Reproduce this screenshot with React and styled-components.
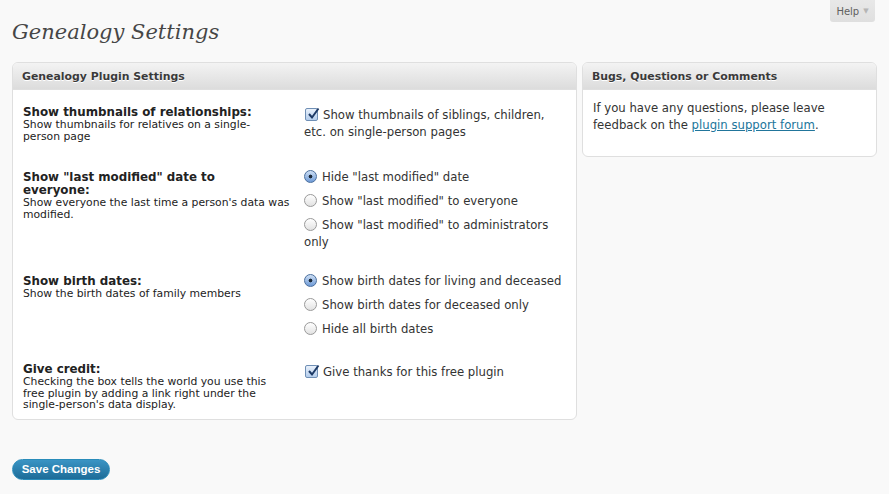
import React from 'react'
import styled, { createGlobalStyle } from 'styled-components'

const GlobalStyle = createGlobalStyle`
  * {
    box-sizing: border-box;
    margin: 0;
    padding: 0;
  }
  body {
    background: #f9f9f9;
    font-family: "DejaVu Sans", Verdana, sans-serif;
    color: #333;
  }
`

const Page = styled.div`
  position: relative;
  min-height: 494px;
  padding: 0 12px;
`

const HelpTab = styled.div`
  position: absolute;
  top: 0;
  right: 14px;
  width: 45px;
  height: 22px;
  display: flex;
  align-items: center;
  justify-content: center;
  gap: 4px;
  background: linear-gradient(to bottom, #e8e8e8, #dfdfdf);
  border-radius: 0 0 3px 3px;
  font-size: 10px;
  color: #606060;
  span {
    font-size: 7px;
    color: #b5b5b5;
  }
`

const Title = styled.h2`
  font-family: "DejaVu Serif", Georgia, serif;
  font-style: italic;
  font-weight: normal;
  font-size: 21px;
  line-height: 29px;
  color: #464646;
  padding: 18px 0 15px;
`

const Columns = styled.div`
  display: flex;
  align-items: flex-start;
  gap: 5px;
`

const Panel = styled.div`
  width: ${p => p.$width}px;
  background: #fff;
  border: 1px solid #dfdfdf;
  border-radius: 6px;
  overflow: hidden;
`

const PanelHeader = styled.h3`
  height: 27px;
  padding: 0 9px;
  display: flex;
  align-items: center;
  font-size: 10.9px;
  font-weight: bold;
  color: #3a3a3a;
  text-shadow: 0 1px 0 #fff;
  background: linear-gradient(to bottom, #f3f3f3, #dcdcdc);
  border-bottom: 1px solid #dfdfdf;
`

const FormBody = styled.div`
  padding: 14px 10px 0;
`

const Row = styled.div`
  display: grid;
  grid-template-columns: 281px 1fr;
  padding-bottom: ${p => p.$space}px;
`

const Label = styled.div`
  padding: 2px 8px 0 0;
`

const LabelTitle = styled.div`
  font-size: 11.85px;
  line-height: 13px;
  font-weight: bold;
  color: #222;
  white-space: pre-line;
`

const Desc = styled.div`
  font-size: 10.8px;
  line-height: 11.5px;
  color: #222;
  white-space: pre-line;
`

const Options = styled.div`
  display: flex;
  flex-direction: column;
  gap: 7px;
  padding-top: ${p => (p.$check ? 3 : 0)}px;
`

const Option = styled.label`
  display: block;
  font-size: 11.7px;
  line-height: 17px;
  color: #333;
`

const Box = styled.span`
  display: inline-block;
  vertical-align: -2px;
  width: 13px;
  height: 13px;
  margin: 0 5px 0 1px;
  border-radius: 2px;
  border: 1px solid #6f8fb5;
  background: linear-gradient(to bottom, #e9f1fb, #b4cdec);
  position: relative;
  svg {
    position: absolute;
    left: 1px;
    top: -2px;
  }
`

const Radio = styled.span`
  display: inline-block;
  vertical-align: -2px;
  width: 13px;
  height: 13px;
  margin-right: 5px;
  border-radius: 50%;
  border: 1px solid ${p => (p.$on ? '#4a6f9e' : '#9a9a9a')};
  background: ${p =>
    p.$on
      ? 'radial-gradient(circle at 50% 50%, #1c2a3a 0 1.6px, transparent 2.2px), linear-gradient(to bottom, #cfe0f5, #6e9ad6)'
      : 'linear-gradient(to bottom, #ffffff, #e2e2e2)'};
`

const SideBody = styled.div`
  padding: 10px 10px 22px;
  font-size: 11.7px;
  line-height: 17px;
  color: #333;
  a {
    color: #21759b;
  }
`

const SaveButton = styled.button`
  margin-top: 39px;
  width: 98px;
  height: 21px;
  border-radius: 11px;
  border: 1px solid #298cba;
  background: linear-gradient(to bottom, #3a94c4, #1d6c98);
  color: #fff;
  font-family: "Liberation Sans", Arial, sans-serif;
  font-size: 11.5px;
  font-weight: bold;
  cursor: pointer;
`

const Check = () => (
  <Box>
    <svg width="13" height="13" viewBox="0 0 13 13">
      <path d="M2 7 L5 10.5 L11.5 1.5" fill="none" stroke="#1d3a66" strokeWidth="2" />
    </svg>
  </Box>
)

const rows = [
  {
    title: 'Show thumbnails of relationships:',
    desc: 'Show thumbnails for relatives on a single-\nperson page',
    check: true,
    options: [{ text: 'Show thumbnails of siblings, children, etc. on single-person pages' }],
    space: 27
  },
  {
    title: 'Show "last modified" date to\neveryone:',
    desc: "Show everyone the last time a person's data was\nmodified.",
    options: [
      { text: 'Hide "last modified" date', on: true },
      { text: 'Show "last modified" to everyone' },
      { text: 'Show "last modified" to administrators only' }
    ],
    space: 22
  },
  {
    title: 'Show birth dates:',
    desc: 'Show the birth dates of family members',
    options: [
      { text: 'Show birth dates for living and deceased', on: true },
      { text: 'Show birth dates for deceased only' },
      { text: 'Hide all birth dates' }
    ],
    space: 23
  },
  {
    title: 'Give credit:',
    desc: "Checking the box tells the world you use this\nfree plugin by adding a link right under the\nsingle-person's data display.",
    check: true,
    options: [{ text: 'Give thanks for this free plugin' }],
    space: 8
  }
]

export default function App() {
  return (
    <Page>
      <GlobalStyle />
      <HelpTab>Help <span>▼</span></HelpTab>
      <Title>Genealogy Settings</Title>
      <Columns>
        <Panel $width={565}>
          <PanelHeader>Genealogy Plugin Settings</PanelHeader>
          <FormBody>
            {rows.map(row => (
              <Row key={row.title} $space={row.space}>
                <Label>
                  <LabelTitle>{row.title}</LabelTitle>
                  <Desc>{row.desc}</Desc>
                </Label>
                <Options $check={row.check}>
                  {row.options.map(opt => (
                    <Option key={opt.text}>
                      {row.check ? <Check /> : <Radio $on={opt.on} />}
                      {opt.text}
                    </Option>
                  ))}
                </Options>
              </Row>
            ))}
          </FormBody>
        </Panel>
        <Panel $width={295}>
          <PanelHeader>Bugs, Questions or Comments</PanelHeader>
          <SideBody>
            If you have any questions, please leave feedback on the{' '}
            <a href="#">plugin support forum</a>.
          </SideBody>
        </Panel>
      </Columns>
      <SaveButton>Save Changes</SaveButton>
    </Page>
  )
}
